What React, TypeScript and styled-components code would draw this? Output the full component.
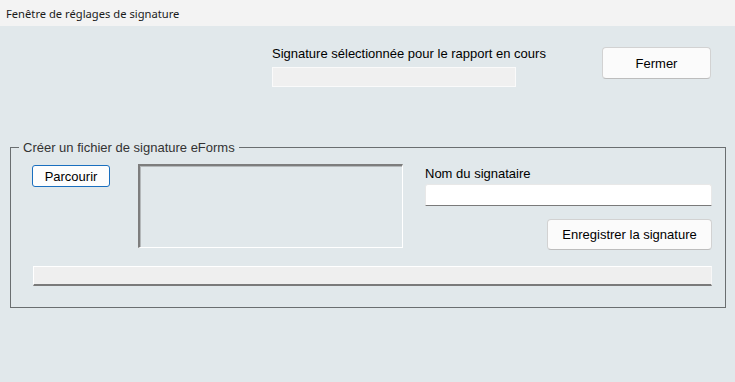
import React from "react";
import styled, { createGlobalStyle } from "styled-components";

const GlobalStyle = createGlobalStyle`
  html, body { margin: 0; padding: 0; }
  body {
    width: 735px;
    height: 382px;
    overflow: hidden;
    background: #e1e8eb;
    font-family: "Liberation Sans", Arial, sans-serif;
    font-size: 13px;
    color: #000;
  }
  * { box-sizing: border-box; }
`;

const Window = styled.div`
  width: 735px;
  height: 382px;
  display: flex;
  flex-direction: column;
  background: #e1e8eb;
`;

const TitleBar = styled.div`
  height: 26px;
  flex: none;
  background: #f3f3f3;
  display: flex;
  align-items: center;
  padding-left: 6px;
  font-family: "Noto Sans", "Open Sans", sans-serif;
  font-size: 11.2px;
  color: #1a1a1a;
`;

const Body = styled.div`
  display: flex;
  flex-direction: column;
  padding: 0 9px 0 10px;
`;

const TopRow = styled.div`
  display: flex;
  justify-content: flex-end;
  align-items: flex-start;
  gap: 86px;
  padding: 20px 15px 0 0;
  height: 114px;
`;

const Column = styled.div`
  display: flex;
  flex-direction: column;
  width: 244px;
`;

const Label = styled.div`
  line-height: 15px;
  height: 15px;
  white-space: nowrap;
  color: #000;
`;

const ReadonlyBox = styled.div`
  margin-top: 6px;
  height: 20px;
  background: #f0f0f0;
  border: 1px solid #fafafa;
`;

const Button = styled.button<{ $variant?: "default" | "focus" }>`
  font-family: "Liberation Sans", Arial, sans-serif;
  font-size: 13px;
  color: #000;
  background: ${(p) => (p.$variant === "focus" ? "#fdfdfd" : "#fbfbfb")};
  border: 1px solid ${(p) => (p.$variant === "focus" ? "#1a6fbf" : "#d2d2d2")};
  border-bottom-color: ${(p) => (p.$variant === "focus" ? "#1a6fbf" : "#bdbdbd")};
  border-radius: ${(p) => (p.$variant === "focus" ? "3px" : "4px")};
  padding: 0;
  display: flex;
  align-items: center;
  justify-content: center;
`;

const CloseButton = styled(Button)`
  width: 109px;
  height: 32px;
  margin-top: 1px;
`;

const GroupBox = styled.fieldset`
  margin: 0;
  width: 716px;
  border: 1px solid #6a6e70;
  padding: 9px 13px 21px 21px;
  min-width: 0;
`;

const Legend = styled.legend`
  padding: 0 4px;
  margin-left: -13px;
  line-height: 15px;
  color: #333;
  white-space: nowrap;
`;

const GroupGrid = styled.div`
  display: grid;
  grid-template-columns: 106px 287px 287px;
  row-gap: 16px;
`;

const BrowseButton = styled(Button)`
  width: 78px;
  height: 22px;
  margin-top: 1px;
`;

const ImageWell = styled.div`
  width: 265px;
  height: 84px;
  border-top: 2px solid #7d7d7d;
  border-left: 2px solid #7d7d7d;
  border-right: 1px solid #ffffff;
  border-bottom: 1px solid #ffffff;
  background: #e1e8eb;
  box-shadow: inset 1px 1px 0 #b4b8ba;
`;

const RightColumn = styled.div`
  display: flex;
  flex-direction: column;
  align-items: stretch;
  padding-top: 2px;
`;

const TextInput = styled.div`
  margin-top: 3px;
  height: 22px;
  background: #ffffff;
  border: 1px solid #e8e8e8;
  border-bottom: 1px solid #7a7a7a;
  border-radius: 3px 3px 0 0;
`;

const SaveButton = styled(Button)`
  align-self: flex-end;
  width: 165px;
  height: 31px;
  margin-top: 13px;
`;

const ProgressBar = styled.div`
  grid-column: 1 / -1;
  margin-left: 1px;
  height: 20px;
  background: #efefef;
  border-top: 1px solid #ffffff;
  border-left: 1px solid #ffffff;
  border-right: 1px solid #f7f7f7;
  border-bottom: 2px solid #7a7a7a;
`;

export default function App() {
  return (
    <>
      <GlobalStyle />
      <Window>
        <TitleBar>Fenêtre de réglages de signature</TitleBar>
        <Body>
          <TopRow>
            <Column>
              <Label>Signature sélectionnée pour le rapport en cours</Label>
              <ReadonlyBox />
            </Column>
            <CloseButton>Fermer</CloseButton>
          </TopRow>
          <GroupBox>
            <Legend>Créer un fichier de signature eForms</Legend>
            <GroupGrid>
              <div>
                <BrowseButton $variant="focus">Parcourir</BrowseButton>
              </div>
              <ImageWell />
              <RightColumn>
                <Label>Nom du signataire</Label>
                <TextInput />
                <SaveButton>Enregistrer la signature</SaveButton>
              </RightColumn>
              <ProgressBar />
            </GroupGrid>
          </GroupBox>
        </Body>
      </Window>
    </>
  );
}
